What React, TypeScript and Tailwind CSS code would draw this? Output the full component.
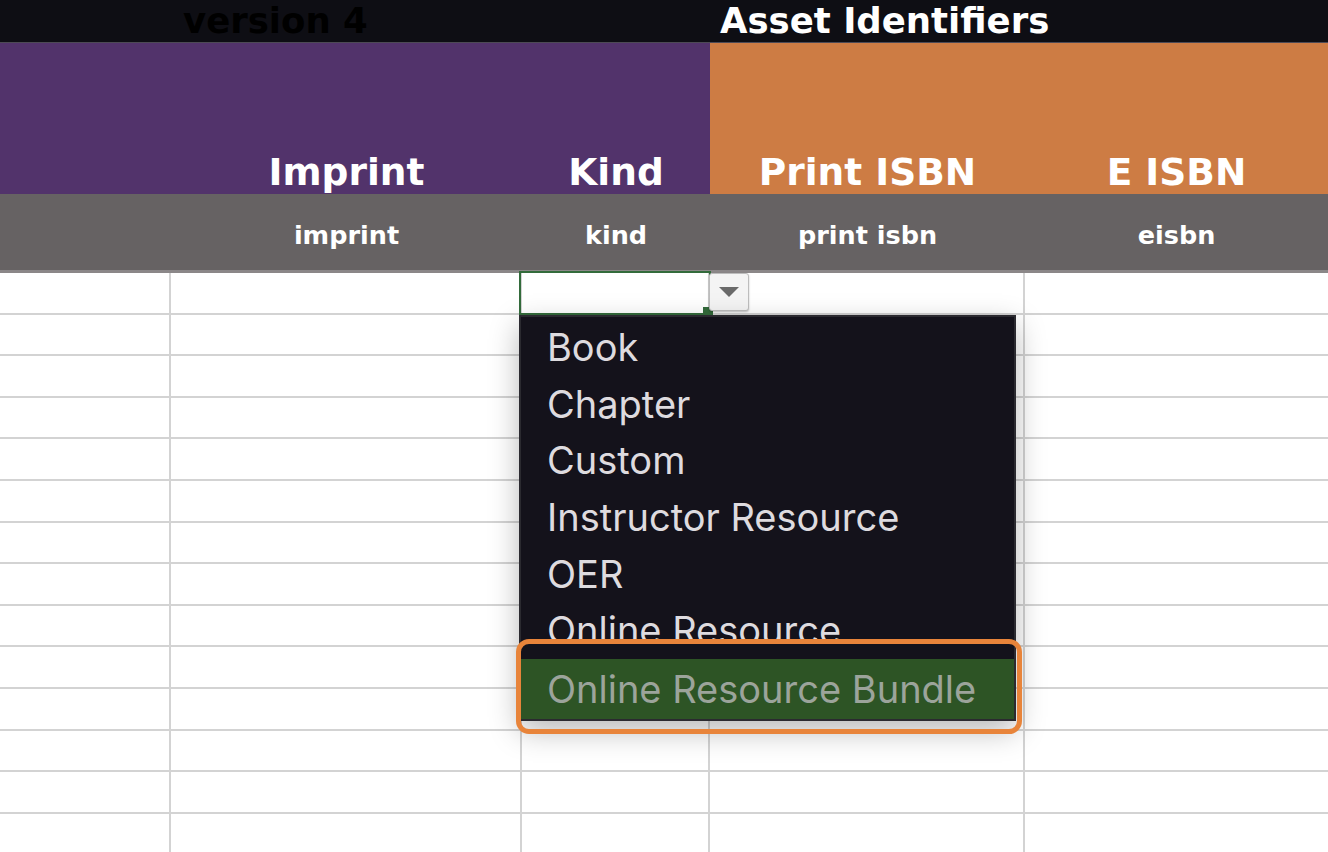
const cols = [171, 351, 188, 315, 303]

const kinds = ['Book', 'Chapter', 'Custom', 'Instructor Resource', 'OER', 'Online Resource']

const headFont = { fontFamily: '"DejaVu Sans", Verdana, sans-serif' }

function HeaderCell({ children, color }: { children?: React.ReactNode; color: string }) {
  return (
    <div className={`flex items-end justify-center pb-[3px] ${color}`}>
      <span className="text-[37.5px] font-bold leading-none text-white">{children}</span>
    </div>
  )
}

function SubCell({ children }: { children?: React.ReactNode }) {
  return (
    <div className="flex items-center justify-center pt-[7px]">
      <span className="text-[25.5px] font-bold leading-none text-white">{children}</span>
    </div>
  )
}

export default function App() {
  const rows = Array.from({ length: 14 }, (_, i) => i)

  return (
    <div className="relative h-[852px] w-[1328px] overflow-hidden bg-white" style={headFont}>
      {/* title bar */}
      <div className="flex h-[43px] border-b border-[#4d4a55] bg-[#0e0e14]">
        <div className="w-[720px] pl-[183px] text-[35.5px] font-bold leading-[42px] text-black">version 4</div>
        <div className="text-[35.5px] font-bold leading-[42px] text-white">Asset Identifiers</div>
      </div>

      {/* group headers */}
      <div className="grid h-[151px] grid-cols-[171px_351px_188px_315px_303px]">
        <HeaderCell color="bg-[#52336b]" />
        <HeaderCell color="bg-[#52336b]">Imprint</HeaderCell>
        <HeaderCell color="bg-[#52336b]">Kind</HeaderCell>
        <HeaderCell color="bg-[#cd7c44]">Print ISBN</HeaderCell>
        <HeaderCell color="bg-[#cd7c44]">E ISBN</HeaderCell>
      </div>

      {/* field keys */}
      <div className="grid h-[79px] grid-cols-[171px_351px_188px_315px_303px] border-b-[3px] border-[#8b8788] bg-[#666263]">
        <SubCell />
        <SubCell>imprint</SubCell>
        <SubCell>kind</SubCell>
        <SubCell>print isbn</SubCell>
        <SubCell>eisbn</SubCell>
      </div>

      {/* sheet body */}
      <div>
        {rows.map((r) => (
          <div key={r} className="flex h-[41.6px]">
            {cols.map((w, c) => (
              <div
                key={c}
                style={{ width: w }}
                className={`h-full border-b-2 border-[#d3d3d3] ${c < cols.length - 1 ? 'border-r-2' : ''}`}
              />
            ))}
          </div>
        ))}
      </div>

      {/* selected cell */}
      <div className="absolute left-[519px] top-[271px] h-[44px] w-[192px] border-2 border-[#336b3b]" />
      <div className="absolute left-[703px] top-[307px] h-[9px] w-[10px] bg-[#336b3b]" />

      {/* dropdown button */}
      <div className="absolute left-[709px] top-[273px] flex h-[38px] w-[40px] items-center justify-center rounded-[3px] border border-[#bdbdbd] bg-[#f4f4f4] shadow-[0_1px_2px_rgba(0,0,0,0.25)]">
        <svg width="22" height="12" viewBox="0 0 22 12">
          <polygon points="1,1 21,1 11,11" fill="#6a6a6a" />
        </svg>
      </div>

      {/* dropdown list */}
      <div
        className="absolute left-[519px] top-[315px] w-[497px] border-2 border-[#2b2a30] bg-[#14121b] pt-[2px] shadow-[0_10px_28px_rgba(0,0,0,0.28)]"
        style={{ fontFamily: 'Inter, "Liberation Sans", sans-serif' }}
      >
        {kinds.map((k) => (
          <div key={k} className="flex h-[56.6px] items-center pl-[26px] text-[38px] leading-none text-[#dedbdf]">
            {k}
          </div>
        ))}
        <div className="flex h-[60px] items-center bg-[#2d5425] pl-[26px] text-[38px] leading-none text-[#9ca49b]">
          Online Resource Bundle
        </div>
      </div>

      {/* highlight annotation */}
      <div className="absolute left-[516px] top-[639px] h-[95px] w-[506px] rounded-[13px] border-[5px] border-[#e8843a]" />
    </div>
  )
}
